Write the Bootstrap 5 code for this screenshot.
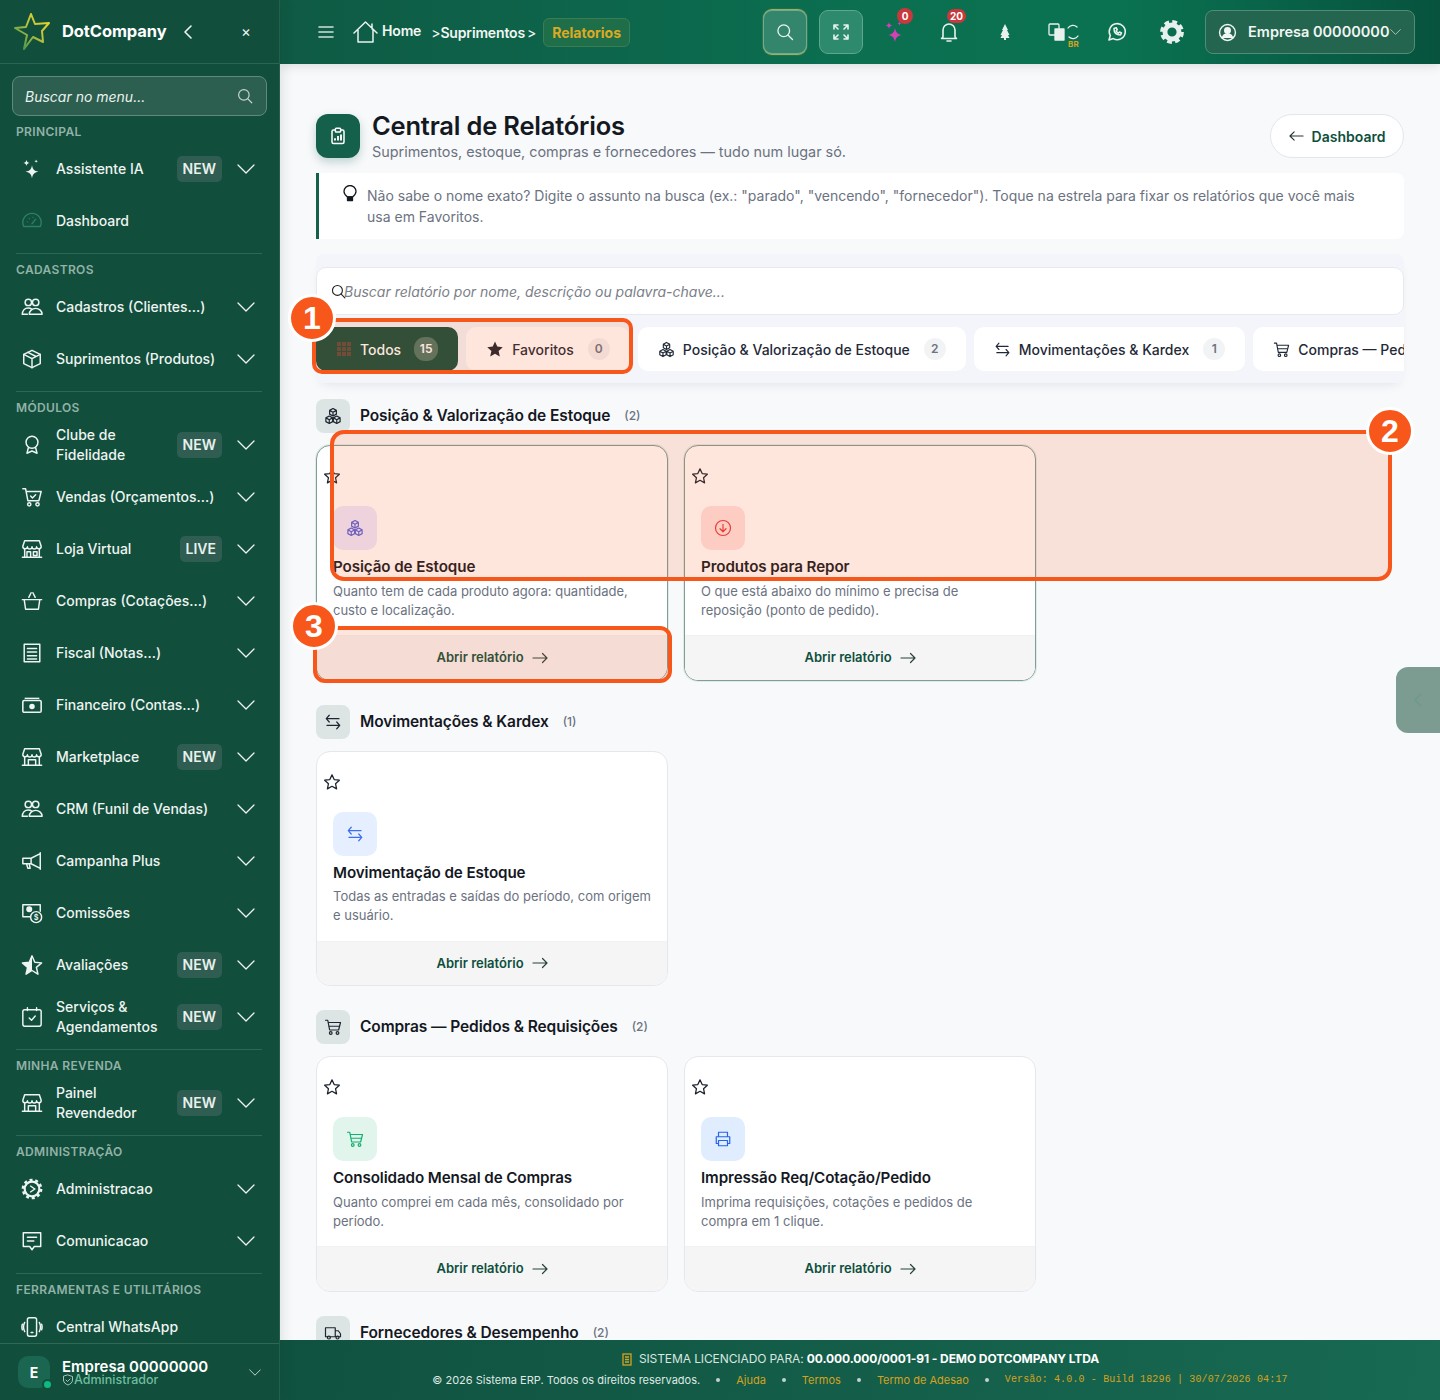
<!doctype html>
<html lang="pt-BR">
<head>
<meta charset="utf-8">
<title>Central de Relatórios</title>
<link href="https://cdn.jsdelivr.net/npm/bootstrap@5.3.0/dist/css/bootstrap.min.css" rel="stylesheet">
<style>
html,body{height:1400px;overflow:hidden}
body{font-family:Inter,"Liberation Sans",sans-serif;background:#f8f9fb;color:#1f2937;position:relative;width:1440px}
a{text-decoration:none}
svg{display:block;flex-shrink:0}
.ico{fill:none;stroke:currentColor;stroke-width:1.6;stroke-linecap:round;stroke-linejoin:round}
.head-font{font-family:Inter,"Liberation Sans",sans-serif;font-weight:600}

/* sidebar */
.side{width:280px;height:1400px;background:#114e3c;color:#eef4f1;position:relative;z-index:3;box-shadow:2px 0 12px rgba(15,40,30,.12);border-right:1px solid #20604d}
.side-top{height:64px;border-bottom:1px solid #2a6655;padding-left:14px}
.side-brand{font-weight:700;font-size:16.5px;color:#fff;margin-left:12px;width:112px;letter-spacing:-.1px;white-space:nowrap;overflow:hidden;text-overflow:ellipsis}
.side-search{margin:12px 12px 0;width:255px;height:40px;border:1px solid #5c8a7c;border-radius:8px;background:#2d5f50;padding:0 12px;color:#eaf2ee;font-size:14px;font-style:italic}
.side-cap{font-size:12px;font-weight:600;color:#92b2a7;line-height:16px;padding:8px 0 3px 16px;letter-spacing:.35px;white-space:nowrap}
.side-rule{height:1px;background:#2d6857;margin:6px 17px 0 16px}
.side-first{padding-top:3px;padding-bottom:3px;height:30px;box-sizing:border-box;display:flex;align-items:center}
.side-item{height:52px;padding-left:21px;color:#eef4f1;font-size:14px;font-weight:500;line-height:20px}
.side-ico{width:22px;height:22px;margin-right:13px}
.side-txt{width:122px;flex:1 1 0}
.side-tag{background:#2f5d52;color:#e8f0ec;border-radius:5px;font-weight:600;font-size:14px;line-height:26px;height:26px;padding:0 6px;margin-right:15px}
.side-chev{width:18px;height:10px;margin-right:24px;flex-shrink:0}
.side-foot{position:absolute;left:0;right:0;bottom:0;height:57px;background:#114e3c;border-top:1px solid #2f6857;padding-left:18px}
.side-ava{width:32px;height:32px;border-radius:10px;background:#1a6650;color:#fff;font-weight:700;font-size:14px;position:relative}
.side-dot{position:absolute;right:-3px;bottom:-2px;width:10px;height:10px;border-radius:50%;background:#10b981;border:2px solid #114e3c;box-sizing:content-box;width:7px;height:7px}
.side-name{font-weight:600;font-size:15px;line-height:15px;color:#fff}
.side-role{font-size:12.5px;line-height:12px;color:#6fbd9f;font-weight:500}

/* topbar */
.topb{height:64px;background:linear-gradient(90deg,#0f5a44 0%,#0b6f50 50%,#0a7251 72%,#07533e 100%);color:#e9f3ee;position:relative;z-index:2;box-shadow:0 2px 10px rgba(0,0,0,.12);padding-left:38px}
.crumb{font-size:14px;font-weight:600;color:#f2f7f4;letter-spacing:-.15px}
.crumb-now{border:1px solid #3a7d55;background:#1f6e4a;color:#dcaa22;border-radius:6px;font-weight:700;font-size:14px;height:29px;width:87px;margin-left:7px}
.tbtn{width:44px;height:44px;border-radius:9px;border:1px solid #5fa68d;background:#2e8a6c}
.tbtn-s{border-color:#74a98a;background:#33866b;box-shadow:0 -1px 1px #a9b76a,0 1px 1px #a9b76a}
.tbadge{position:absolute;background:#c8383c;color:#fff;font-size:10px;font-weight:700;border-radius:9px;height:14px;line-height:14px;text-align:center}
.t-ico{position:relative;width:24px;height:24px}
.comp{width:210px;height:44px;border:1px solid #4f8d78;border-radius:8px;background:#24654f;font-size:14.5px;font-weight:600;color:#f1f6f3;padding-left:12px;margin-left:20px}

/* main */
.mainw{height:1276px;overflow:hidden;padding:50px 36px 0}
.page-ico{width:44px;height:44px;border-radius:12px;background:#14604a;color:#fff;box-shadow:0 4px 10px rgba(20,96,74,.25)}
.page-title{font-size:25.5px;line-height:26px;color:#14181f;margin:0;font-weight:600;letter-spacing:-.2px}
.page-sub{font-size:14.4px;line-height:20px;color:#6b7280;margin-top:3px}
.back-btn{width:134px;height:44px;border-radius:22px;background:#fff;border:1px solid #e3e7ec;color:#0e4f3c;font-weight:600;font-size:14px}
.tip-box{margin-top:11px;height:66px;background:#fff;border-left:3px solid #14604a;border-radius:0 8px 8px 0;padding:12px 24px 0 15px;font-size:14px;line-height:21px;color:#6b7280}
.fil-panel{margin-top:15px;background:#f3f5fa;padding:13px 0 12px;box-shadow:0 6px 12px -6px rgba(30,40,70,.13);overflow:hidden;border-radius:8px}
.fil-in{height:48px;background:#fff;border:1px solid #e6e9ef;border-radius:10px;padding-left:13px;font-size:14px;font-style:italic;color:#7b8088}
.fil-in svg{margin-right:-3px}
.tabz{margin-top:12px;gap:8px}
.tabx{height:44px;background:#fff;border-radius:10px;padding:0 20px;font-size:14px;font-weight:500;color:#1f2937;white-space:nowrap;flex-shrink:0;gap:8px}
.tabx-on{background:#114e3c;color:#fff}
.tabn{min-width:22px;height:22px;line-height:22px;border-radius:11px;background:#f2f3f5;color:#6b7280;font-size:12px;font-weight:600;text-align:center;margin-left:6px}
.tabx-on .tabn{background:#4a7768;color:#fff;min-width:24px;height:24px;line-height:24px}
.sec-h{margin-bottom:12px;height:34px}
.sec-i{width:34px;height:34px;border-radius:8px;background:#dce5e3;color:#1c2530;margin-right:10px}
.sec-t{font-size:15.5px;font-weight:600;color:#14181f;letter-spacing:-.1px}
.sec-n{font-size:12px;color:#6b7280;font-weight:500;margin-left:14px}
.repc{height:235.5px;border:1px solid #e4e7ec;border-radius:14px;overflow:hidden;background:#fff;box-shadow:none}
.repc-act{border-color:#7d9f94;box-shadow:0 0 0 1px rgba(125,159,148,.18)}
.repc .card-body{padding:21px 16px 0;flex:1 1 auto}
.repc-star{margin-left:-10px;color:#1c2530}
.repc-tile{width:44px;height:44px;border-radius:10px;margin-top:21px}
.repc-title{font-size:15.2px;font-weight:600;line-height:22px;color:#14181f;margin:6px 0 3.5px;letter-spacing:-.1px}
.repc-desc{font-size:13px;line-height:19px;color:#6b7280;margin:0}
.repc .card-footer{height:44.5px;padding:0;background:#f5f5f6;border-top:1px solid #f0f1f3;color:#0e4f3c;font-size:13px;font-weight:600;gap:8px;border-radius:0}
.sec-wrap{margin-bottom:24px}

/* footer */
.foot{height:60px;background:linear-gradient(100deg,#105240,#186a52);color:#e6efeb;text-align:center;position:relative;z-index:2;padding-top:11px}
.foot-a{font-size:12px;line-height:16px;letter-spacing:-.1px;color:#d9e6e0}
.foot-b{font-size:11px;line-height:14px;margin-top:6px;gap:10px;color:#dfe9e4}
.foot-g{color:#d4a21f}
.foot-m{font-family:"Liberation Mono",monospace;color:#d4a21f;font-size:10px;letter-spacing:.15px}
.foot-d{width:4px;height:4px;border-radius:50%;background:#c5d3cd;margin:0 6px}

/* tour overlays */
.tour{position:absolute;border:4px solid #f7571b;background:rgba(248,90,28,.15);z-index:10;pointer-events:none}
.tour1{left:312px;top:318px;width:321px;height:56px;border-radius:10px}
.tour2{left:330px;top:430px;width:1062px;height:151px;border-radius:0 0 14px 14px;border-top-left-radius:14px}
.tour3{left:313px;top:626px;width:359px;height:57px;border-radius:12px}
.tourn{position:absolute;width:48px;height:48px;border-radius:50%;background:#f7571b;border:3px solid #fff;color:#fff;font-family:"Liberation Sans",sans-serif;font-weight:700;font-size:32px;z-index:11}
.tourn1{left:288px;top:294px}
.tourn2{left:1366px;top:407px}
.tourn3{left:290px;top:602px}
.handle{position:absolute;right:0;top:667px;width:44px;height:66px;background:#7c9c92;border-radius:12px 0 0 12px;color:#6d9a8a;z-index:4}
</style>
</head>
<body class="d-flex">
<svg width="0" height="0" style="position:absolute">
<defs>
<linearGradient id="lg" x1="0" y1="1" x2="1" y2="0"><stop offset="0" stop-color="#2f8a55"/><stop offset=".55" stop-color="#b9c43a"/><stop offset="1" stop-color="#f2d92c"/></linearGradient>
<symbol id="i-chev" viewBox="0 0 18 10"><path d="M1 1l8 8 8-8" fill="none" stroke="currentColor" stroke-width="1.3" stroke-linecap="round" stroke-linejoin="round"/></symbol>
<symbol id="i-search" viewBox="0 0 24 24"><circle cx="10.5" cy="10.5" r="7"/><path d="M15.8 15.8L21 21"/></symbol>
<symbol id="i-spark" viewBox="0 0 24 24"><path d="M12 8c.9 4.6 2.4 6.1 7 7-4.600.9-6.100 2.400-7 7-.9-4.600-2.400-6.100-7-7 4.600-.9 6.100-2.400 7-7zM6 2c.4 2.200 1.200 3 3.400 3.400C7.200 5.800 6.400 6.600 6 8.800 5.600 6.600 4.800 5.800 2.600 5.400 4.800 5 5.600 4.200 6 2zM16.500 1.500c.2 1.200.8 1.800 2 2-1.200.2-1.800.8-2 2-.2-1.200-.8-1.800-2-2 1.200-.2 1.800-.8 2-2z" fill="currentColor"/></symbol>
<symbol id="i-gauge" viewBox="0 0 24 24"><path d="M3 18a10 10 0 1 1 18 0zM12 15l4-5M7 13h.01M9 9.500h.01M13 8h.01" fill="none" stroke="currentColor" stroke-width="1.500" stroke-linecap="round" stroke-linejoin="round"/></symbol>
<symbol id="i-users" viewBox="0 0 24 24"><g class="ico"><circle cx="8" cy="7" r="3.500"/><circle cx="16" cy="7" r="3.500"/><path d="M1.500 20c0-4 2.500-7 6.500-7 1.500 0 2.700.4 3.700 1.200M9 20c0-3.500 3-6.500 7-6.500s7 3 7 6.500z"/><path d="M1.500 20H7"/></g></symbol>
<symbol id="i-box" viewBox="0 0 24 24"><g class="ico"><path d="M12 2.500l9 4.500v10l-9 4.500L3 17V7z"/><path d="M3 7l9 4.500L21 7M12 11.500v10M7.500 4.700l9 4.600"/></g></symbol>
<symbol id="i-award" viewBox="0 0 24 24"><g class="ico"><circle cx="12" cy="9" r="6.500"/><path d="M8 15l-1.500 6 5.500-2.500 5.500 2.500L16 15"/></g></symbol>
<symbol id="i-cart" viewBox="0 0 24 24"><g class="ico"><path d="M2 3h3l2.500 13h12L22 6H6"/><circle cx="9" cy="20" r="1.800"/><circle cx="18" cy="20" r="1.800"/><path d="M10.500 11l2 2 3.500-3.500"/></g></symbol>
<symbol id="i-store" viewBox="0 0 24 24"><g class="ico"><path d="M4 3h16l2 6a2.500 2.500 0 0 1-5 .5 2.500 2.500 0 0 1-5 0 2.500 2.500 0 0 1-5 0A2.500 2.500 0 0 1 2 9z"/><path d="M4 12v9h16v-9M1.500 21h21M8 21v-6h8v6"/></g></symbol>
<symbol id="i-store2" viewBox="0 0 24 24"><g class="ico"><path d="M4 3h16l2 6a2.500 2.500 0 0 1-5 .5 2.500 2.500 0 0 1-5 0 2.500 2.500 0 0 1-5 0A2.500 2.500 0 0 1 2 9z"/><path d="M4 12v9h16v-9M1.500 21h21M6.500 21v-6h4v6M13.500 15h4v4h-4z"/></g></symbol>
<symbol id="i-basket" viewBox="0 0 24 24"><g class="ico"><path d="M1.500 10.500h21M3.500 10.500L5 21h14l1.500-10.500M8.500 8L11 3M15.500 8L13 3"/></g></symbol>
<symbol id="i-receipt" viewBox="0 0 24 24"><g class="ico"><path d="M3.500 2.500h17v19h-17z"/><path d="M7 7h10M7 11h10M7 15h10M7 18.500h10"/></g></symbol>
<symbol id="i-cash" viewBox="0 0 24 24"><path d="M4 4h16v1.500H4z" fill="currentColor"/><rect x="2" y="7" width="20" height="13" rx="1.500" fill="none" stroke="currentColor" stroke-width="1.700"/><circle cx="12" cy="13.500" r="3" fill="currentColor"/></symbol>
<symbol id="i-mega" viewBox="0 0 24 24"><g class="ico"><path d="M2 9h9l10-5v16l-10-5H2zM6 15l1.500 5H10l-1-5M21 3v18M11 9v6"/></g></symbol>
<symbol id="i-comm" viewBox="0 0 24 24"><g class="ico"><path d="M10 16H2V3h19v7"/><circle cx="9" cy="8" r="2.500" fill="currentColor"/><circle cx="16.500" cy="16.500" r="6"/></g><text x="16.500" y="19.500" font-size="8" font-family="Inter,sans-serif" font-weight="600" text-anchor="middle" fill="currentColor">$</text></symbol>
<symbol id="i-starh" viewBox="0 0 24 24"><path d="M12 2l3 7 7.500.7-5.700 4.900 1.700 7.400L12 18l-6.500 4 1.700-7.400L1.500 9.700 9 9z" fill="none" stroke="currentColor" stroke-width="1.600" stroke-linejoin="round"/><path d="M12 2L9 9l-7.500.7 5.700 4.900-1.700 7.400L12 18z" fill="currentColor"/></symbol>
<symbol id="i-cal" viewBox="0 0 24 24"><g class="ico"><rect x="2" y="4" width="20" height="18" rx="2"/><path d="M7 2v3M17 2v3M9 13l2.500 2.500L15.500 11"/></g></symbol>
<symbol id="i-gear" viewBox="0 0 24 24"><circle cx="12" cy="12" r="8" fill="none" stroke="currentColor" stroke-width="2.400"/><circle cx="12" cy="12" r="10" fill="none" stroke="currentColor" stroke-width="2.600" stroke-dasharray="3.300 3"/><path d="M10 8.500l5 3.500-5 3.500" fill="none" stroke="currentColor" stroke-width="1.500"/></symbol>
<symbol id="i-msg" viewBox="0 0 24 24"><g class="ico"><path d="M2.500 3h19v15h-7L12 21.500 9.500 18h-7z"/><path d="M7 8h10M7 12h7"/></g></symbol>
<symbol id="i-phone" viewBox="0 0 24 24"><g class="ico"><rect x="7" y="2" width="10" height="20" rx="2"/><path d="M11 18h2M4 7c-1.500 3-1.500 7 0 10M1.500 9c-.7 2-.7 4 0 6M20 7c1.500 3 1.500 7 0 10M22.500 9c.7 2 .7 4 0 6"/></g></symbol>
<symbol id="i-cubes" viewBox="0 0 24 24"><g class="ico"><path d="M12 2l4.500 2.500v5L12 12 7.500 9.500v-5zM7 12l4.500 2.500v5L7 22l-4.500-2.500v-5zM17 12l4.500 2.500v5L17 22l-4.500-2.500v-5zM7.500 4.500L12 7l4.500-2.500M12 7v5M2.500 14.500L7 17l4.500-2.500M7 17v5M12.500 14.500L17 17l4.500-2.500M17 17v5"/></g></symbol>
<symbol id="i-swap" viewBox="0 0 24 24"><g class="ico"><path d="M7 3L3 7.500h17M17 21l4-4.500H4M3 7.500L7 12M21 16.500L17 12"/></g></symbol>
<symbol id="i-scart" viewBox="0 0 24 24"><g class="ico"><path d="M2 3h3l2.500 13h12L22 6H6"/><circle cx="9" cy="20" r="1.800"/><circle cx="18" cy="20" r="1.800"/><path d="M7 11h13"/></g></symbol>
<symbol id="i-star" viewBox="0 0 24 24"><path d="M12 2.500l2.900 6.300 6.900.8-5.100 4.700 1.400 6.800-6.100-3.400-6.100 3.400 1.400-6.800-5.100-4.700 6.900-.8z" fill="none" stroke="currentColor" stroke-width="1.700" stroke-linejoin="round"/></symbol>
<symbol id="i-arr" viewBox="0 0 16 12"><path d="M1 6h14M10.500 1.500L15 6l-4.500 4.500" fill="none" stroke="currentColor" stroke-width="1.200" stroke-linecap="round" stroke-linejoin="round"/></symbol>
<symbol id="i-truck" viewBox="0 0 24 24"><g class="ico"><path d="M2 5h13v12H2zM15 9h4l3 4v4h-7"/><circle cx="6.500" cy="18" r="2"/><circle cx="18" cy="18" r="2"/></g></symbol>
</defs>
</svg>

<aside class="side flex-shrink-0 overflow-hidden">
  <div class="side-top d-flex align-items-center">
    <svg width="36" height="37" viewBox="0 0 36 37"><path d="M17 1l4 10 14-1-7 8 1 11-10-5-9 12 3-14L1 15l11-1z" fill="none" stroke="url(#lg)" stroke-width="2" stroke-linejoin="round"/></svg>
    <div class="side-brand">DotCompany</div>
    <svg class="ico ms-2" width="12" height="16" viewBox="0 0 12 16"><path d="M9 2L3 8l6 6"/></svg>
    <span class="ms-auto" style="margin-right:28px;font-size:15px;line-height:1">×</span>
  </div>
  <div class="side-search d-flex align-items-center justify-content-between">
    <span>Buscar no menu...</span>
    <svg class="ico" width="18" height="18" style="color:#c4d6cf"><use href="#i-search"/></svg>
  </div>
  <div class="side-cap">PRINCIPAL</div>
  <a class="side-item d-flex align-items-center"><svg class="side-ico"><use href="#i-spark"/></svg><span class="side-txt">Assistente IA</span><span class="side-tag">NEW</span><svg class="side-chev"><use href="#i-chev"/></svg></a>
  <a class="side-item d-flex align-items-center"><svg class="side-ico" style="color:#2d7e66"><use href="#i-gauge"/></svg><span class="side-txt">Dashboard</span></a>
  <div class="side-rule"></div>
  <div class="side-cap">CADASTROS</div>
  <a class="side-item d-flex align-items-center"><svg class="side-ico"><use href="#i-users"/></svg><span class="side-txt">Cadastros (Clientes...)</span><svg class="side-chev"><use href="#i-chev"/></svg></a>
  <a class="side-item d-flex align-items-center"><svg class="side-ico"><use href="#i-box"/></svg><span class="side-txt">Suprimentos (Produtos)</span><svg class="side-chev"><use href="#i-chev"/></svg></a>
  <div class="side-rule"></div>
  <div class="side-cap">MÓDULOS</div>
  <a class="side-item d-flex align-items-center"><svg class="side-ico"><use href="#i-award"/></svg><span class="side-txt">Clube de<br>Fidelidade</span><span class="side-tag">NEW</span><svg class="side-chev"><use href="#i-chev"/></svg></a>
  <a class="side-item d-flex align-items-center"><svg class="side-ico"><use href="#i-cart"/></svg><span class="side-txt">Vendas (Orçamentos...)</span><svg class="side-chev"><use href="#i-chev"/></svg></a>
  <a class="side-item d-flex align-items-center"><svg class="side-ico"><use href="#i-store2"/></svg><span class="side-txt">Loja Virtual</span><span class="side-tag">LIVE</span><svg class="side-chev"><use href="#i-chev"/></svg></a>
  <a class="side-item d-flex align-items-center"><svg class="side-ico"><use href="#i-basket"/></svg><span class="side-txt">Compras (Cotações...)</span><svg class="side-chev"><use href="#i-chev"/></svg></a>
  <a class="side-item d-flex align-items-center"><svg class="side-ico"><use href="#i-receipt"/></svg><span class="side-txt">Fiscal (Notas...)</span><svg class="side-chev"><use href="#i-chev"/></svg></a>
  <a class="side-item d-flex align-items-center"><svg class="side-ico"><use href="#i-cash"/></svg><span class="side-txt">Financeiro (Contas...)</span><svg class="side-chev"><use href="#i-chev"/></svg></a>
  <a class="side-item d-flex align-items-center"><svg class="side-ico"><use href="#i-store"/></svg><span class="side-txt">Marketplace</span><span class="side-tag">NEW</span><svg class="side-chev"><use href="#i-chev"/></svg></a>
  <a class="side-item d-flex align-items-center"><svg class="side-ico"><use href="#i-users"/></svg><span class="side-txt">CRM (Funil de Vendas)</span><svg class="side-chev"><use href="#i-chev"/></svg></a>
  <a class="side-item d-flex align-items-center"><svg class="side-ico"><use href="#i-mega"/></svg><span class="side-txt">Campanha Plus</span><svg class="side-chev"><use href="#i-chev"/></svg></a>
  <a class="side-item d-flex align-items-center"><svg class="side-ico"><use href="#i-comm"/></svg><span class="side-txt">Comissões</span><svg class="side-chev"><use href="#i-chev"/></svg></a>
  <a class="side-item d-flex align-items-center"><svg class="side-ico"><use href="#i-starh"/></svg><span class="side-txt">Avaliações</span><span class="side-tag">NEW</span><svg class="side-chev"><use href="#i-chev"/></svg></a>
  <a class="side-item d-flex align-items-center"><svg class="side-ico"><use href="#i-cal"/></svg><span class="side-txt">Serviços &amp;<br>Agendamentos</span><span class="side-tag">NEW</span><svg class="side-chev"><use href="#i-chev"/></svg></a>
  <div class="side-rule"></div>
  <div class="side-cap">MINHA REVENDA</div>
  <a class="side-item d-flex align-items-center"><svg class="side-ico"><use href="#i-store"/></svg><span class="side-txt">Painel<br>Revendedor</span><span class="side-tag">NEW</span><svg class="side-chev"><use href="#i-chev"/></svg></a>
  <div class="side-rule"></div>
  <div class="side-cap">ADMINISTRAÇÃO</div>
  <a class="side-item d-flex align-items-center"><svg class="side-ico"><use href="#i-gear"/></svg><span class="side-txt">Administracao</span><svg class="side-chev"><use href="#i-chev"/></svg></a>
  <a class="side-item d-flex align-items-center"><svg class="side-ico"><use href="#i-msg"/></svg><span class="side-txt">Comunicacao</span><svg class="side-chev"><use href="#i-chev"/></svg></a>
  <div class="side-rule"></div>
  <div class="side-cap">FERRAMENTAS E UTILITÁRIOS</div>
  <a class="side-item d-flex align-items-center"><svg class="side-ico"><use href="#i-phone"/></svg><span class="side-txt">Central WhatsApp</span></a>
  <div class="side-foot d-flex align-items-center">
    <div class="side-ava d-flex align-items-center justify-content-center">E<span class="side-dot"></span></div>
    <div class="ms-2 ps-1">
      <div class="side-name">Empresa 00000000</div>
      <div class="side-role d-flex align-items-center"><svg class="ico" width="12" height="12" viewBox="0 0 24 24" style="color:#cfe0d9"><path d="M12 2l9 3v7c0 5-4 8-9 10-5-2-9-5-9-10V5zM8 12l3 3 5-5"/></svg>Administrador</div>
    </div>
    <svg class="ms-auto" width="12" height="7" style="margin-right:18px;color:#d8e4df"><use href="#i-chev"/></svg>
  </div>
</aside>

<div class="flex-grow-1 d-flex flex-column" style="width:1160px">
  <header class="topb d-flex align-items-center">
    <svg class="ico" width="16" height="14" viewBox="0 0 16 14" style="color:#cfe1d9"><path d="M1 2h14M1 7h14M1 12h14"/></svg>
    <svg class="ico" width="25" height="24" viewBox="0 0 25 24" style="margin-left:19px;stroke-width:1.500"><path d="M1 13L12.500 2 24 13M5 10v12h15V10M19 4v5"/></svg>
    <span class="crumb" style="margin:-3px 0 0 4px">Home</span>
    <span class="crumb fw-normal" style="margin-left:10px">&gt;</span>
    <span class="crumb">Suprimentos</span>
    <span class="crumb fw-normal" style="margin-left:2px">&gt;</span>
    <span class="crumb-now d-flex align-items-center justify-content-center">Relatorios</span>
    <div class="tbtn tbtn-s d-flex align-items-center justify-content-center" style="margin-left:133px">
      <svg class="ico" width="20" height="20"><use href="#i-search"/></svg>
    </div>
    <div class="tbtn d-flex align-items-center justify-content-center" style="margin-left:12px">
      <svg class="ico" width="18" height="18" viewBox="0 0 18 18"><path d="M2 6V2h4M2 2l4 4M16 6V2h-4M16 2l-4 4M2 12v4h4M2 16l4-4M16 12v4h-4M16 16l-4-4"/></svg>
    </div>
    <div class="t-ico" style="margin-left:20px;color:#d63fb8">
      <svg width="24" height="24"><use href="#i-spark"/></svg>
      <span class="tbadge" style="left:14px;top:-12px;width:16px;height:16px;line-height:16px">0</span>
    </div>
    <div class="t-ico" style="margin-left:30px">
      <svg class="ico" width="24" height="24" viewBox="0 0 24 24"><path d="M6 17V10a6 6 0 0 1 12 0v7l1.500 1.500h-15zM10 21h4"/></svg>
      <span class="tbadge" style="left:10px;top:-11px;width:19px">20</span>
    </div>
    <div class="t-ico" style="margin-left:32px">
      <svg width="24" height="24" viewBox="0 0 24 24"><path d="M12 4l3 6h-1l2.500 5h-1.500l1.500 3H13v2h-2v-2H7.500L9 15H7.500L10 10H9z" fill="#e8f2ed"/></svg>
    </div>
    <div class="t-ico" style="margin-left:31px;width:32px">
      <svg class="ico" width="32" height="24" viewBox="0 0 32 24" style="stroke-width:1.300"><rect x="1" y="4" width="10" height="11" rx="1"/><path d="M7 9h9v11H7z" fill="#e8f2ed"/><path d="M20 8a6 6 0 0 1 9-1M30 16a6 6 0 0 1-9 1"/></svg>
      <span class="foot-g position-absolute" style="left:20px;top:20px;font-size:8px;font-weight:700;line-height:8px">BR</span>
    </div>
    <div class="t-ico" style="margin-left:25px">
      <svg class="ico" width="24" height="24" viewBox="0 0 24 24"><path d="M4 20l1.300-4.400a8 8 0 1 1 3 3zM9 8.500c0 4 2.500 6.500 6.500 6.500l1-2-2-1-1 1c-1-.3-2-1.500-2.300-2.300l1-1-1-2z"/></svg>
    </div>
    <div class="t-ico" style="margin-left:30px;width:26px;height:26px">
      <svg width="26" height="26" viewBox="0 0 24 24" fill="none" stroke="#e7f0ec"><circle cx="12" cy="12" r="6.500" stroke-width="4.500"/><circle cx="12" cy="12" r="9.500" stroke-width="3" stroke-dasharray="4.460 3"/></svg>
    </div>
    <div class="comp d-flex align-items-center">
      <svg class="ico" width="19" height="19" viewBox="0 0 24 24" style="stroke-width:1.800"><circle cx="12" cy="12" r="10"/><circle cx="12" cy="9.500" r="3.500" fill="currentColor"/><path d="M5.500 19c1-3.500 3.500-5 6.500-5s5.500 1.500 6.500 5" fill="currentColor"/></svg>
      <span style="margin-left:11px">Empresa 00000000</span>
      <svg class="ms-auto" width="11" height="6" style="margin-right:13px;color:#c9dbd3"><use href="#i-chev"/></svg>
    </div>
  </header>

  <main class="mainw flex-grow-1">
    <div class="d-flex align-items-start">
      <div class="page-ico d-flex align-items-center justify-content-center">
        <svg width="18" height="18" viewBox="0 0 24 24" fill="none" stroke="currentColor" stroke-width="2"><rect x="4" y="4" width="16" height="18" rx="2"/><rect x="8.500" y="1.500" width="7" height="5" rx="1" fill="#14604a"/><path d="M8 18v-3M12 18v-6M16 18v-8" stroke-width="2.500"/></svg>
      </div>
      <div class="ms-2 ps-1 flex-grow-1" style="margin-top:-1px">
        <h1 class="page-title head-font">Central de Relatórios</h1>
        <div class="page-sub">Suprimentos, estoque, compras e fornecedores — tudo num lugar só.</div>
      </div>
      <a class="back-btn d-flex align-items-center justify-content-center gap-2">
        <svg width="15" height="12" style="transform:scaleX(-1);color:#2a3530"><use href="#i-arr"/></svg>Dashboard
      </a>
    </div>
    <div class="tip-box d-flex">
      <svg class="ico flex-shrink-0" width="16" height="18" viewBox="0 0 16 18" style="color:#14181f;margin:0 9px 0 8px;stroke-width:1.300"><path d="M5.500 12C3.500 10.500 2 9 2 6.500a6 6 0 0 1 12 0c0 2.500-1.500 4-3.500 5.500z"/><path d="M5.500 12h5v3.500h-5z" fill="currentColor"/></svg>
      <div>Não sabe o nome exato? Digite o assunto na busca (ex.: "parado", "vencendo", "fornecedor"). Toque na estrela para fixar os relatórios que você mais usa em Favoritos.</div>
    </div>

    <div class="fil-panel">
      <div class="fil-in d-flex align-items-center">
        <svg class="ico" width="17" height="17" style="color:#222"><use href="#i-search"/></svg>
        <span>Buscar relatório por nome, descrição ou palavra-chave...</span>
      </div>
      <div class="tabz d-flex">
        <a class="tabx tabx-on d-flex align-items-center">
          <svg width="16" height="16" viewBox="0 0 16 16" fill="#5b4a3f"><path d="M1 1h4v4H1zM6 1h4v4H6zM11 1h4v4h-4zM1 6h4v4H1zM6 6h4v4H6zM11 6h4v4h-4zM1 11h4v4H1zM6 11h4v4H6zM11 11h4v4h-4z"/></svg>Todos<span class="tabn" style="margin-left:5px">15</span>
        </a>
        <a class="tabx d-flex align-items-center">
          <svg width="18" height="18" viewBox="0 0 24 24" fill="#1d2430"><path d="M12 2l3 6.800 7.300.8-5.500 5 1.600 7.300L12 18.200 5.600 21.900l1.600-7.300-5.500-5L9 8.800z"/></svg>Favoritos<span class="tabn">0</span>
        </a>
        <a class="tabx d-flex align-items-center">
          <svg width="17" height="17"><use href="#i-cubes"/></svg>Posição &amp; Valorização de Estoque<span class="tabn">2</span>
        </a>
        <a class="tabx d-flex align-items-center">
          <svg width="17" height="17"><use href="#i-swap"/></svg>Movimentações &amp; Kardex<span class="tabn">1</span>
        </a>
        <a class="tabx d-flex align-items-center">
          <svg width="17" height="17"><use href="#i-scart"/></svg>Compras — Pedidos &amp; Requisições<span class="tabn">2</span>
        </a>
      </div>
    </div>

    <section class="sec-wrap" style="margin-top:16px">
      <div class="sec-h d-flex align-items-center">
        <div class="sec-i d-flex align-items-center justify-content-center"><svg width="18" height="18"><use href="#i-cubes"/></svg></div>
        <span class="sec-t head-font">Posição &amp; Valorização de Estoque</span><span class="sec-n">(2)</span>
      </div>
      <div class="row g-3">
        <div class="col-4">
          <div class="card repc repc-act">
            <div class="card-body">
              <svg class="repc-star" width="18" height="18"><use href="#i-star"/></svg>
              <div class="repc-tile d-flex align-items-center justify-content-center" style="background:#ede9fe;color:#5b63dc"><svg width="18" height="18"><use href="#i-cubes"/></svg></div>
              <div class="repc-title head-font">Posição de Estoque</div>
              <p class="repc-desc">Quanto tem de cada produto agora: quantidade, custo e localização.</p>
            </div>
            <div class="card-footer d-flex align-items-center justify-content-center">Abrir relatório<svg width="16" height="12" style="color:#27423a"><use href="#i-arr"/></svg></div>
          </div>
        </div>
        <div class="col-4">
          <div class="card repc repc-act">
            <div class="card-body">
              <svg class="repc-star" width="18" height="18"><use href="#i-star"/></svg>
              <div class="repc-tile d-flex align-items-center justify-content-center" style="background:#fee2e2;color:#e5383b"><svg class="ico" width="18" height="18" viewBox="0 0 24 24"><circle cx="12" cy="12" r="10"/><path d="M12 7v10M8 13l4 4 4-4"/></svg></div>
              <div class="repc-title head-font">Produtos para Repor</div>
              <p class="repc-desc">O que está abaixo do mínimo e precisa de reposição (ponto de pedido).</p>
            </div>
            <div class="card-footer d-flex align-items-center justify-content-center">Abrir relatório<svg width="16" height="12" style="color:#27423a"><use href="#i-arr"/></svg></div>
          </div>
        </div>
      </div>
    </section>

    <section class="sec-wrap">
      <div class="sec-h d-flex align-items-center">
        <div class="sec-i d-flex align-items-center justify-content-center"><svg width="18" height="18"><use href="#i-swap"/></svg></div>
        <span class="sec-t head-font">Movimentações &amp; Kardex</span><span class="sec-n">(1)</span>
      </div>
      <div class="row g-3">
        <div class="col-4">
          <div class="card repc">
            <div class="card-body">
              <svg class="repc-star" width="18" height="18"><use href="#i-star"/></svg>
              <div class="repc-tile d-flex align-items-center justify-content-center" style="background:#e6efff;color:#3b6ef0"><svg width="18" height="18"><use href="#i-swap"/></svg></div>
              <div class="repc-title head-font">Movimentação de Estoque</div>
              <p class="repc-desc">Todas as entradas e saídas do período, com origem e usuário.</p>
            </div>
            <div class="card-footer d-flex align-items-center justify-content-center">Abrir relatório<svg width="16" height="12" style="color:#27423a"><use href="#i-arr"/></svg></div>
          </div>
        </div>
      </div>
    </section>

    <section class="sec-wrap">
      <div class="sec-h d-flex align-items-center">
        <div class="sec-i d-flex align-items-center justify-content-center"><svg width="18" height="18"><use href="#i-scart"/></svg></div>
        <span class="sec-t head-font">Compras — Pedidos &amp; Requisições</span><span class="sec-n">(2)</span>
      </div>
      <div class="row g-3">
        <div class="col-4">
          <div class="card repc">
            <div class="card-body">
              <svg class="repc-star" width="18" height="18"><use href="#i-star"/></svg>
              <div class="repc-tile d-flex align-items-center justify-content-center" style="background:#e2f5ec;color:#10b070"><svg width="18" height="18"><use href="#i-scart"/></svg></div>
              <div class="repc-title head-font">Consolidado Mensal de Compras</div>
              <p class="repc-desc">Quanto comprei em cada mês, consolidado por período.</p>
            </div>
            <div class="card-footer d-flex align-items-center justify-content-center">Abrir relatório<svg width="16" height="12" style="color:#27423a"><use href="#i-arr"/></svg></div>
          </div>
        </div>
        <div class="col-4">
          <div class="card repc">
            <div class="card-body">
              <svg class="repc-star" width="18" height="18"><use href="#i-star"/></svg>
              <div class="repc-tile d-flex align-items-center justify-content-center" style="background:#e0edff;color:#2563eb"><svg class="ico" width="18" height="18" viewBox="0 0 24 24"><path d="M6 9V3h12v6M6 18H3V9h18v9h-3M6 14h12v7H6z"/></svg></div>
              <div class="repc-title head-font">Impressão Req/Cotação/Pedido</div>
              <p class="repc-desc">Imprima requisições, cotações e pedidos de compra em 1 clique.</p>
            </div>
            <div class="card-footer d-flex align-items-center justify-content-center">Abrir relatório<svg width="16" height="12" style="color:#27423a"><use href="#i-arr"/></svg></div>
          </div>
        </div>
      </div>
    </section>

    <section class="sec-wrap">
      <div class="sec-h d-flex align-items-center">
        <div class="sec-i d-flex align-items-center justify-content-center"><svg width="18" height="18"><use href="#i-truck"/></svg></div>
        <span class="sec-t head-font">Fornecedores &amp; Desempenho</span><span class="sec-n">(2)</span>
      </div>
    </section>
  </main>

  <footer class="foot">
    <div class="foot-a d-flex align-items-center justify-content-center">
      <svg width="12" height="13" viewBox="0 0 12 13" fill="none" stroke="#d4a21f" stroke-width="1.300" style="margin-right:6px"><rect x="2" y="1" width="8" height="11"/><path d="M4 4h4M4 6.500h4M4 9h4"/></svg>
      <span>SISTEMA LICENCIADO PARA: <b class="text-white">00.000.000/0001-91 - DEMO DOTCOMPANY LTDA</b></span>
    </div>
    <div class="foot-b d-flex align-items-center justify-content-center">
      <span>© 2026 Sistema ERP. Todos os direitos reservados.</span><span class="foot-d"></span>
      <span class="foot-g">Ajuda</span><span class="foot-d"></span>
      <span class="foot-g">Termos</span><span class="foot-d"></span>
      <span class="foot-g">Termo de Adesao</span><span class="foot-d"></span>
      <span class="foot-m">Versão: 4.0.0 - Build 18296 | 30/07/2026 04:17</span>
    </div>
  </footer>
</div>

<div class="handle d-flex align-items-center justify-content-center">
  <svg class="ico" width="10" height="16" viewBox="0 0 10 16"><path d="M8 2L2 8l6 6"/></svg>
</div>

<div class="tour tour1"></div>
<div class="tour tour2"></div>
<div class="tour tour3"></div>
<div class="tourn tourn1 d-flex align-items-center justify-content-center">1</div>
<div class="tourn tourn2 d-flex align-items-center justify-content-center">2</div>
<div class="tourn tourn3 d-flex align-items-center justify-content-center">3</div>

<script src="https://cdn.jsdelivr.net/npm/bootstrap@5.3.0/dist/js/bootstrap.bundle.min.js"></script>
</body>
</html>
